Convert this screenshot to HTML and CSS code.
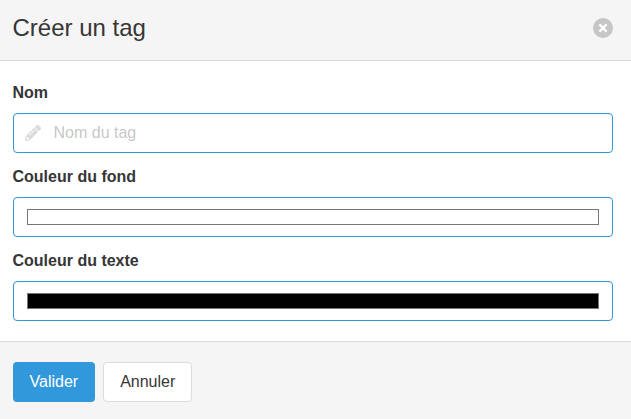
FILE: index.html
```html
<!DOCTYPE html>
<html lang="fr">
<head>
<meta charset="utf-8">
<title>Créer un tag</title>
<link rel="stylesheet" href="styles.css">
</head>
<body>
<form class="modal-card">
  <header class="modal-head">
    <h1 class="modal-title">Créer un tag</h1>
    <button type="button" class="delete" aria-label="Fermer">
      <svg class="delete-cross" viewBox="0 0 20 20" aria-hidden="true"><path d="M6.4 6.4l7.2 7.2M13.6 6.4l-7.2 7.2"/></svg>
    </button>
  </header>
  <section class="modal-body">
    <div class="field">
      <label class="label" for="name">Nom</label>
      <div class="control">
        <svg class="icon" viewBox="0 0 512 512" aria-hidden="true"><path d="M497.9 142.1l-46.1 46.1c-4.7 4.7-12.3 4.7-17 0l-111-111c-4.7-4.7-4.7-12.3 0-17l46.1-46.1c18.7-18.7 49.1-18.7 67.9 0l60.1 60.1c18.8 18.7 18.8 49.1 0 67.9zM284.2 99.8L21.6 362.4.4 483.9c-2.9 16.4 11.4 30.6 27.8 27.8l121.5-21.3 262.6-262.6c4.7-4.7 4.7-12.3 0-17l-111-111c-4.8-4.7-12.4-4.7-17.1 0zM124.1 339.9c-5.5-5.5-5.5-14.3 0-19.8l154-154c5.5-5.5 14.3-5.5 19.8 0s5.5 14.3 0 19.8l-154 154c-5.5 5.5-14.3 5.5-19.8 0zM88 424h48v36.3l-64.5 11.3-31.1-31.1L51.7 376H88v48z"/></svg>
        <input class="input input-text" id="name" type="text" placeholder="Nom du tag">
      </div>
    </div>
    <div class="field">
      <div class="label">Couleur du fond</div>
      <div class="input input-color"><div class="swatch swatch-white"></div></div>
    </div>
    <div class="field">
      <div class="label">Couleur du texte</div>
      <div class="input input-color"><div class="swatch swatch-black"></div></div>
    </div>
  </section>
  <footer class="modal-foot">
    <button type="button" class="button button-primary">Valider</button>
    <button type="button" class="button">Annuler</button>
  </footer>
</form>
</body>
</html>
```
FILE: styles.css
```css
*, *::before, *::after {
  box-sizing: border-box;
}

body {
  margin: 0;
  background: #f5f5f5;
  color: #363636;
  font: 16px/24px "Liberation Sans", Arial, sans-serif;
  overflow: hidden;
}

.modal-head {
  display: flex;
  align-items: center;
  justify-content: space-between;
  height: 61px;
  padding: 0 18.5px 4px 12.5px;
  border-bottom: 1px solid #dbdbdb;
  background: #f5f5f5;
}

.modal-title {
  margin: 0;
  font-size: 24px;
  font-weight: 400;
  line-height: 24px;
}

.delete {
  width: 20px;
  height: 20px;
  padding: 0;
  border: 0;
  border-radius: 50%;
  background: rgba(10, 10, 10, 0.2);
}

.delete-cross {
  display: block;
  width: 20px;
  height: 20px;
  stroke: #fff;
  stroke-width: 2.3;
}

.modal-body {
  padding: 20px 18.5px 20px 12.5px;
  background: #fff;
}

.field + .field {
  margin-top: 12px;
}

.label {
  display: block;
  margin-bottom: 8px;
  font-weight: 700;
}

.control {
  position: relative;
}

.icon {
  position: absolute;
  top: 12px;
  left: 12px;
  width: 16px;
  height: 16px;
  fill: #dbdbdb;
  stroke: #dbdbdb;
  stroke-width: 4;
  overflow: visible;
}

.input {
  display: block;
  width: 100%;
  height: 40px;
  border: 1px solid #3298dc;
  border-radius: 4px;
  background: #fff;
  box-shadow: inset 0 1px 2px rgba(10, 10, 10, 0.05);
}

.input-text {
  padding: 0 12px 0 40px;
  color: #363636;
  font: inherit;
  outline: 0;
}

.input-text::placeholder {
  color: rgba(54, 54, 54, 0.3);
}

.input-color {
  padding: 11px 13px;
}

.swatch {
  height: 16px;
  border: 1px solid #777;
}

.swatch-white {
  background: #fff;
}

.swatch-black {
  background: #000;
}

.modal-foot {
  display: flex;
  gap: 8px;
  padding: 20px 18.5px 20px 12.5px;
  border-top: 1px solid #dbdbdb;
  background: #f5f5f5;
}

.button {
  height: 40px;
  padding: 0 16px;
  border: 1px solid #dbdbdb;
  border-radius: 4px;
  background: #fff;
  color: #363636;
  font: inherit;
}

.button-primary {
  border-color: transparent;
  background: #3298dc;
  color: #fff;
}
```
